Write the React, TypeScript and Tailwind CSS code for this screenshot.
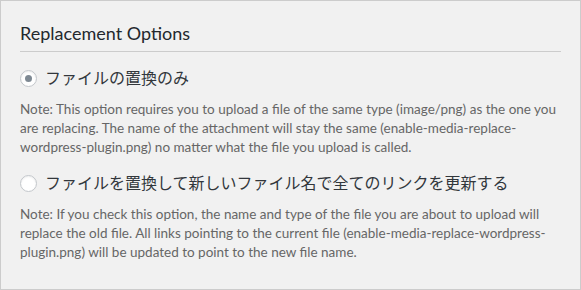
import React from 'react';

const options = [
    {
        id: 'replace',
        label: 'ファイルの置換のみ',
        checked: true,
        note: 'Note: This option requires you to upload a file of the same type (image/png) as the one you are replacing. The name of the attachment will stay the same (enable-media-replace-wordpress-plugin.png) no matter what the file you upload is called.',
    },
    {
        id: 'replace_and_search',
        label: 'ファイルを置換して新しいファイル名で全てのリンクを更新する',
        checked: false,
        note: 'Note: If you check this option, the name and type of the file you are about to upload will replace the old file. All links pointing to the current file (enable-media-replace-wordpress-plugin.png) will be updated to point to the new file name.',
    },
];

function Radio({ checked }: { checked: boolean }) {
    return (
        <span className="flex h-[17px] w-[17px] shrink-0 items-center justify-center rounded-full border border-[#c3c7cb] bg-white shadow-[inset_0_1px_2px_rgba(0,0,0,0.07)]">
            {checked && <span className="h-[7px] w-[7px] rounded-full bg-[#7e8993]" />}
        </span>
    );
}

export default function App() {
    return (
        <div
            className="h-[290px] w-[581px] border border-[#cccccc] bg-[#f1f1f1] px-[19px] pt-[20px]"
            style={{ fontFamily: 'Lato, "Noto Sans CJK JP", sans-serif' }}
        >
            <h2 className="border-b border-[#cccccc] pb-[6px] text-[18px] leading-[24px] text-[#23282d]">
                Replacement Options
            </h2>
            {options.map(opt => (
                <div key={opt.id} className="mt-[16px]">
                    <label className="flex items-center gap-[8px]">
                        <Radio checked={opt.checked} />
                        <span className="text-[16px] leading-[20px] text-[#32373c]">{opt.label}</span>
                    </label>
                    <p className="mt-[12px] text-[13.5px] leading-[19px] text-[#666666]">{opt.note}</p>
                </div>
            ))}
        </div>
    );
}
